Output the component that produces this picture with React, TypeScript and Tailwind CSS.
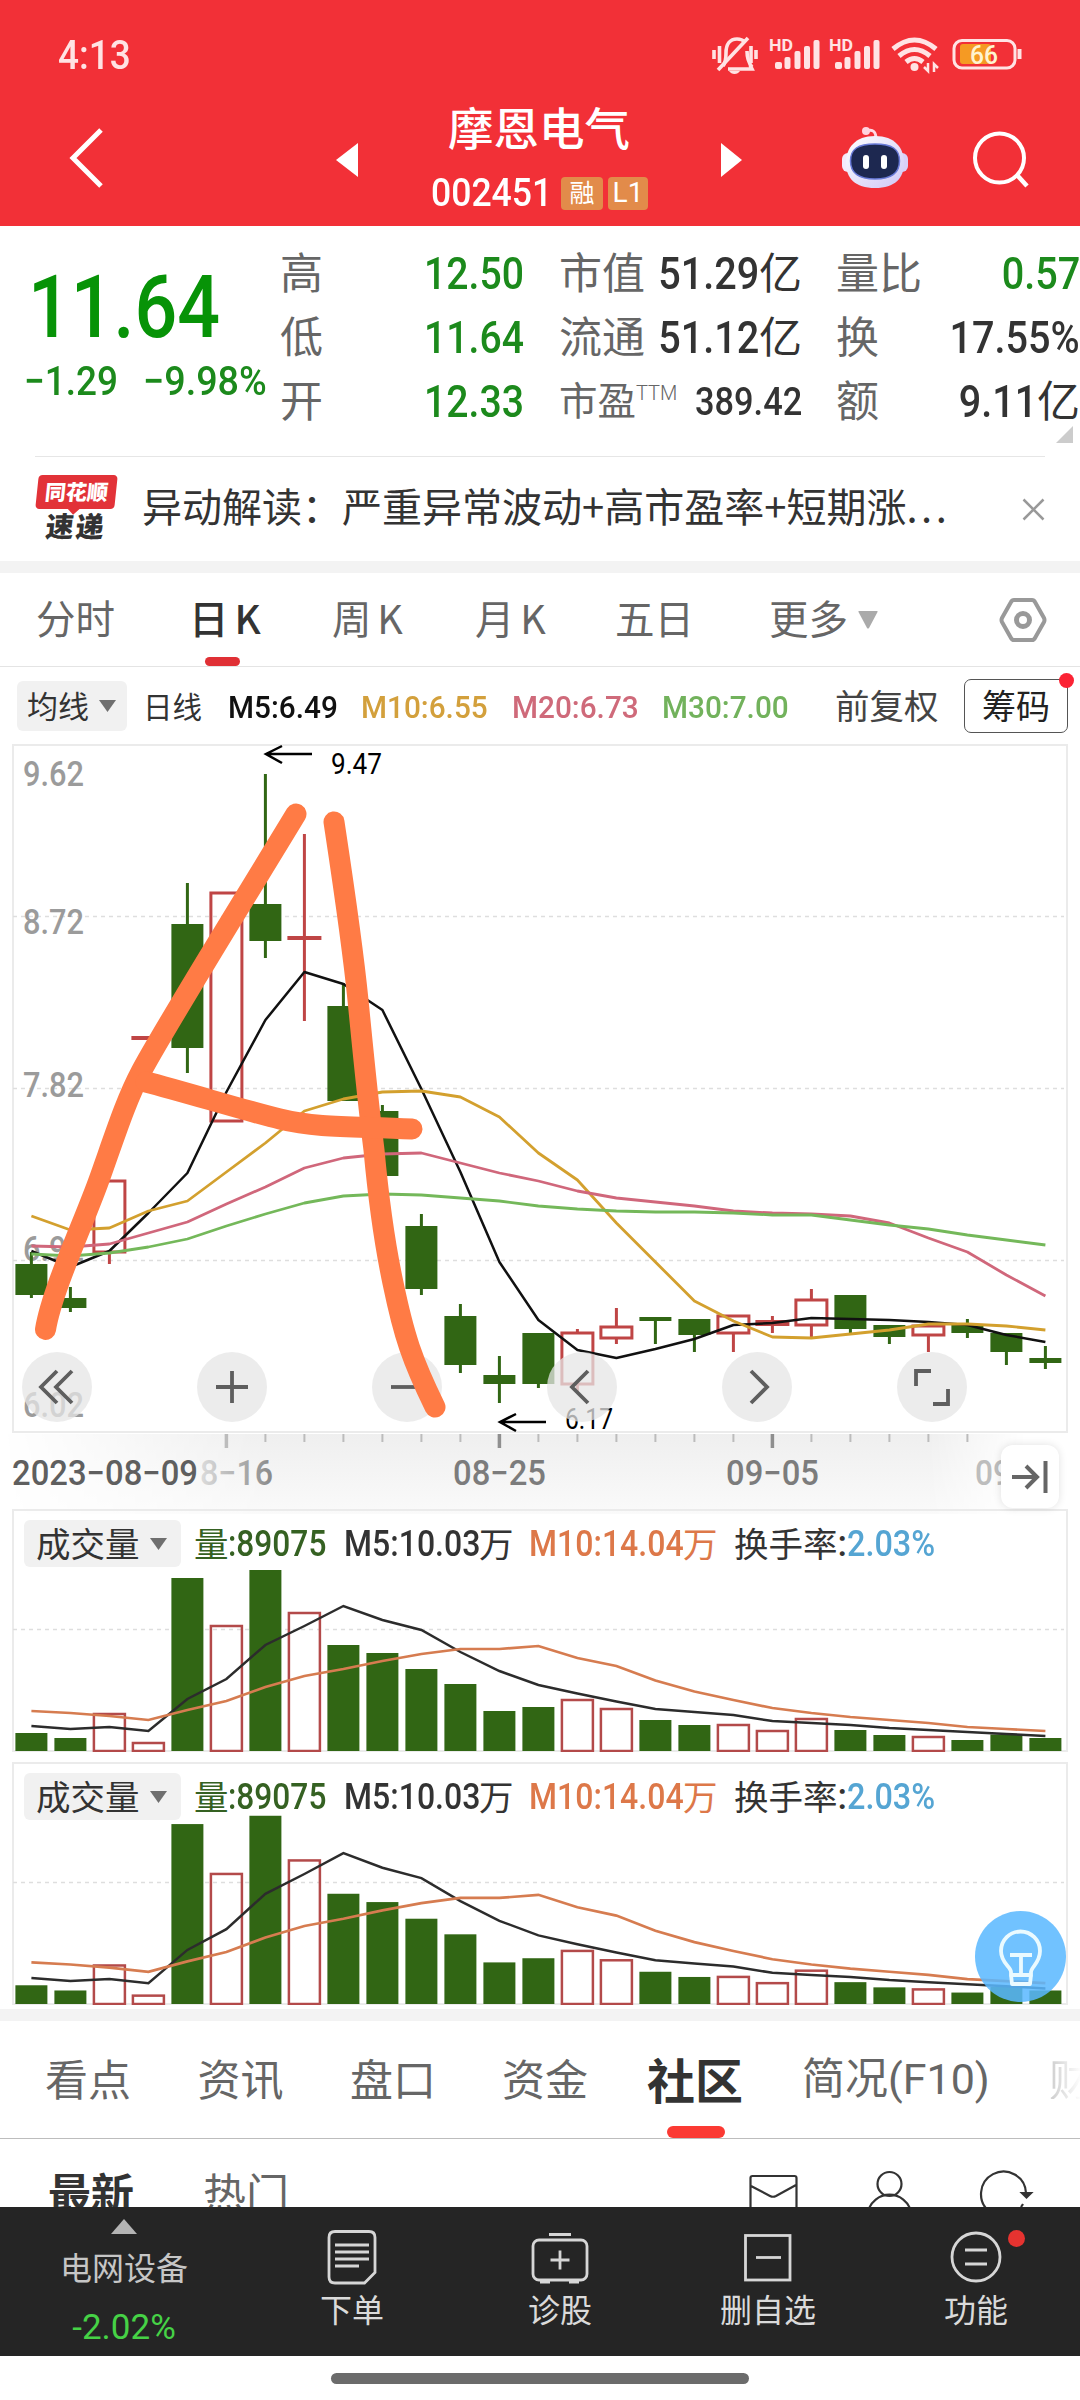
import { FC, ReactNode } from 'react';
import clsx from 'clsx';

type Candle = { up?: boolean; top: number; bottom: number; high?: number; low?: number };

const FIRST_X = 31.4;
const STEP = 39;
const cx = (i: number) => FIRST_X + STEP * i;
const toPoints = (values: number[]) => values.map((y, i) => `${cx(i)},${y}`).join(' ');

const candles: Candle[] = [
    { top: 1264, bottom: 1295, high: 1252, low: 1298 },
    { top: 1298, bottom: 1308, high: 1287, low: 1312 },
    { up: true, top: 1180, bottom: 1253, low: 1264 },
    { up: true, top: 1036, bottom: 1040 },
    { top: 924, bottom: 1048, high: 883, low: 1073 },
    { up: true, top: 892, bottom: 1122 },
    { top: 904, bottom: 941, high: 774, low: 958 },
    { up: true, top: 936, bottom: 940, high: 834, low: 1021 },
    { top: 1006, bottom: 1101, high: 983 },
    { top: 1111, bottom: 1176, high: 1105 },
    { top: 1226, bottom: 1289, high: 1214, low: 1295 },
    { top: 1316, bottom: 1365, high: 1304, low: 1373 },
    { top: 1375, bottom: 1384, high: 1356, low: 1403 },
    { top: 1333, bottom: 1384, low: 1388 },
    { up: true, top: 1332, bottom: 1385, high: 1329, low: 1392 },
    { up: true, top: 1326, bottom: 1339, high: 1308, low: 1344 },
    { top: 1317, bottom: 1321, low: 1344 },
    { top: 1319, bottom: 1335, low: 1352 },
    { up: true, top: 1315, bottom: 1334, low: 1352 },
    { up: true, top: 1320, bottom: 1326, high: 1316, low: 1333 },
    { up: true, top: 1299, bottom: 1326, high: 1289, low: 1337 },
    { top: 1295, bottom: 1329, low: 1333 },
    { top: 1325, bottom: 1337, low: 1344 },
    { up: true, top: 1325, bottom: 1336, low: 1352 },
    { top: 1325, bottom: 1333, high: 1319, low: 1338 },
    { top: 1333, bottom: 1352, low: 1365 },
    { top: 1358, bottom: 1363, high: 1346, low: 1369 },
];

const ma5 = [
    1251, 1267, 1251, 1213, 1173, 1092, 1020, 972, 984, 1010, 1089, 1172, 1262, 1320, 1350, 1358,
    1349, 1339, 1325, 1323, 1318, 1319, 1320, 1322, 1325, 1335, 1342,
];
const ma10 = [
    1216, 1230, 1228, 1211, 1201, 1172, 1143, 1111, 1099, 1092, 1091, 1097, 1117, 1153, 1180, 1223,
    1262, 1301, 1321, 1337, 1338, 1334, 1330, 1324, 1324, 1326, 1330,
];
const ma20 = [
    1246, 1247, 1244, 1233, 1222, 1204, 1187, 1168, 1158, 1154, 1153, 1163, 1173, 1181, 1191, 1198,
    1202, 1206, 1211, 1213, 1214, 1216, 1223, 1238, 1252, 1275, 1296,
];
const ma30 = [
    1254, 1256, 1253, 1247, 1239, 1226, 1214, 1203, 1196, 1194, 1195, 1198, 1201, 1206, 1209, 1211,
    1212, 1212, 1213, 1215, 1215, 1220, 1225, 1229, 1235, 1240, 1245,
];

// bar heights and averages in px above the base line
const volumes = [
    18, 13, 38, 9, 173, 126, 181, 139, 106, 98, 82, 67, 40, 44, 52, 43, 31, 26, 27, 21, 33, 21, 16,
    15, 11, 16.5, 13,
];
const volMa5 = [
    25, 22, 24, 20, 52, 72, 106, 125, 145, 131, 121, 99, 80, 66, 57.5, 49.5, 42, 39, 36, 30, 28, 26,
    23, 21, 19, 17, 15,
];
const volMa10 = [
    40, 38, 35, 31, 41, 50, 64, 75, 82, 90, 97, 102, 102, 105, 93, 85, 70.5, 59.5, 51, 43, 38, 34,
    31, 28, 24, 22, 20,
];

const quotes = [
    ['高', '12.50', '市值', '51.29', '量比', '0.57'],
    ['低', '11.64', '流通', '51.12', '换', '17.55%'],
    ['开', '12.33', '市盈', '389.42', '额', '9.11'],
];

const Num: FC<{ className?: string; children: ReactNode }> = ({ className, children }) => (
    <span
        className={clsx(
            'inline-block whitespace-nowrap font-[Roboto,sans-serif] font-medium',
            className
        )}
    >
        {children}
    </span>
);

const StatusBar = () => (
    <div className="flex h-[84px] items-center pl-[58px]">
        <Num className="mt-[27px] w-[640px] origin-left scale-x-[0.9] text-[41px] leading-none text-[#ffe3e4]">
            4:13
        </Num>
        <svg
            className="ml-[2px]"
            width="330"
            height="84"
            viewBox="700 0 330 84"
            fill="none"
            stroke="#ffe3e4"
            strokeWidth="3.6"
        >
            <path d="M714 50v9M719.5 46v17M751 46v17M756 50v9" />
            <path d="M723 66c3-4 3-8 3-13 0-9 4-14 11-14 3 0 6 1 8 3M747 51c0 6 1 11 5 16M728 69h24l-2-4" />
            <path d="M718 70L748 38" />
            <path d="M729 71h11q-2 3-5.500 3t-5.500-3z" fill="#ffe3e4" stroke="none" />
            {[775, 835].map((x) => (
                <g key={x} fill="#ffe3e4" stroke="none">
                    <text
                        x={x - 6}
                        y="51"
                        fontFamily="Roboto"
                        fontWeight="700"
                        fontSize="17"
                        textLength="24"
                        lengthAdjust="spacingAndGlyphs"
                    >
                        HD
                    </text>
                    <rect x={x} y="62" width="7" height="7" rx="2" />
                    <rect x={x + 9.500} y="57" width="6" height="12" rx="2" />
                    <rect x={x + 19.500} y="51" width="6" height="18" rx="2" />
                    <rect x={x + 29} y="46" width="6" height="23" rx="2" />
                    <rect x={x + 38.500} y="40" width="6" height="29" rx="2" />
                </g>
            ))}
            <path d="M893 49Q914.500 31 936 49M899 56Q914.500 43 930 56M906 62Q914.500 55 923 62" strokeWidth="5" />
            <circle cx="914.500" cy="67" r="4" fill="#ffe3e4" stroke="none" />
            <path d="M928 63v8l-4-4M934 72v-8l4 4" strokeWidth="2.500" />
            <rect x="954" y="40.500" width="61" height="27.500" rx="8" strokeWidth="3" />
            <path d="M1019.500 49v10" strokeWidth="4" />
            <rect x="960" y="44" width="31" height="20" rx="3" fill="#f59a23" stroke="none" />
            <text
                x="970"
                y="63.500"
                fill="#fff3d0"
                stroke="none"
                fontFamily="Roboto"
                fontWeight="500"
                fontSize="25"
                textLength="28"
                lengthAdjust="spacingAndGlyphs"
            >
                66
            </text>
        </svg>
    </div>
);

const Robot = () => (
    <svg width="70" height="66" viewBox="840 125 70 66">
        <defs>
            <linearGradient id="shell" x1="0" y1="0" x2="1" y2="1">
                <stop offset="0" stopColor="#fff" />
                <stop offset="1" stopColor="#cfc8f6" />
            </linearGradient>
        </defs>
        <path d="M867 131q9-3 9 8" stroke="#ffd9e4" strokeWidth="3" fill="none" />
        <circle cx="866" cy="131" r="4" fill="#ffd3df" />
        <rect x="842" y="153" width="12" height="19" rx="6" fill="#f3e9fb" />
        <rect x="896" y="153" width="12" height="19" rx="6" fill="#d9d0f8" />
        <path d="M875 136c20 0 29 12 29 27s-9 25-29 25-29-10-29-25 9-27 29-27z" fill="url(#shell)" />
        <path
            d="M875 144c17 0 24.500 5 24.500 17s-7.500 18-24.500 18-24.500-6-24.500-18 7.500-17 24.500-17z"
            fill="#1d2850"
            stroke="#6a7bd8"
            strokeWidth="1.500"
        />
        <rect x="863" y="155" width="6" height="14" rx="3" fill="#fff" />
        <rect x="881" y="155" width="6" height="14" rx="3" fill="#fff" />
    </svg>
);

const Header = () => (
    <header className="h-[226px] shrink-0 bg-[#f23037] text-white">
        <StatusBar />
        <div className="flex h-[142px] items-start">
            <svg className="ml-[66px] mt-[40px]" width="40" height="66" viewBox="66 124 40 66">
                <path d="M101 130L73 158l28 28" fill="none" stroke="#fff" strokeWidth="5" />
            </svg>
            <svg className="ml-[230px] mt-[59px]" width="22" height="34">
                <path d="M22 0v34L0 17z" fill="#fff" />
            </svg>
            <div className="ml-[52px] w-[260px] pt-[15px]">
                <h1 className="pl-[38px] text-[45.500px] leading-[54px] font-medium">摩恩电气</h1>
                <div className="mt-[23px] flex h-[34px] items-center pl-[21px]">
                    <Num className="w-[132px] origin-left scale-x-[0.9] text-[39.500px] leading-[34px]">
                        002451
                    </Num>
                    <span className="-ml-[2px] flex h-[33px] w-[42px] items-center justify-center rounded-[4px] bg-[#e28b4a] pb-[3px] text-[25px] leading-none">
                        融
                    </span>
                    <span className="ml-[5px] flex h-[33px] w-[40px] items-center justify-center rounded-[4px] bg-[#e28b4a] font-[Roboto] text-[28px] leading-none">
                        L1
                    </span>
                </div>
            </div>
            <svg className="ml-[51px] mt-[59px]" width="22" height="34">
                <path d="M0 0v34l21-17z" fill="#fff" />
            </svg>
            <div className="ml-[97px] mt-[41px]">
                <Robot />
            </div>
            <svg className="ml-[60px] mt-[44px]" width="64" height="64" viewBox="970 128 64 64">
                <g fill="none" stroke="#fff" strokeWidth="4">
                    <circle cx="999.500" cy="158" r="24.500" />
                    <path d="M1017 175l10 11" strokeWidth="4.500" />
                </g>
            </svg>
        </div>
    </header>
);

const Quote = () => (
    <section className="relative flex h-[230px] shrink-0 text-[#333]">
        <div className="w-[280px] text-[#079307]">
            <Num className="mt-[36px] ml-[28px] origin-left scale-x-[0.865] text-[87px] leading-[90px]">
                11.64
            </Num>
            <div className="-mt-[1px] flex pl-[24px] text-[41px] leading-[60px] text-[#1c8a1c]">
                <Num className="w-[119px] origin-left scale-x-[0.9]">−1.29</Num>
                <Num className="origin-left scale-x-[0.92]">−9.98%</Num>
            </div>
        </div>
        <div className="flex-1 pt-[15px]">
            {quotes.map(([a, av, b, bv, c, cv], i) => (
                <div key={a} className="flex h-[64px] items-center text-[43px] leading-none">
                    <span className="w-[60px] pb-[5px] text-[#666]">{a}</span>
                    <Num className="w-[184px] origin-right scale-x-[0.89] pt-[2px] text-right text-[44px] text-[#1c8a1c]">
                        {av}
                    </Num>
                    <span
                        className={clsx(
                            'ml-[35px] flex w-[120px] items-center pb-[5px] whitespace-nowrap text-[#666]',
                            i === 2 && 'text-[38.500px]'
                        )}
                    >
                        {b}
                        {i === 2 && (
                            <sup className="top-0 -mt-[12px] font-[Roboto] text-[20px] leading-none font-light">
                                TTM
                            </sup>
                        )}
                    </span>
                    <span className="flex w-[123px] items-center justify-end">
                        <Num
                            className={clsx(
                                'origin-right pt-[2px]',
                                i === 2
                                    ? 'scale-x-[0.87] text-[39.500px]'
                                    : 'scale-x-[0.9] text-[44px]'
                            )}
                        >
                            {bv}
                        </Num>
                        {i < 2 && <span className="pb-[5px]">亿</span>}
                    </span>
                    <span className="ml-[34px] w-[90px] pb-[5px] text-[#666]">{c}</span>
                    <span
                        className={clsx(
                            'flex w-[154px] items-center justify-end',
                            i === 0 && 'text-[#1c8a1c]'
                        )}
                    >
                        <Num className="origin-right scale-x-[0.9] pt-[2px] text-[44px]">{cv}</Num>
                        {i === 2 && <span className="pb-[5px]">亿</span>}
                    </span>
                </div>
            ))}
        </div>
        <svg className="absolute right-[7px] bottom-[13px]" width="17" height="17">
            <path d="M17 0v17H0z" fill="#ccc" />
        </svg>
    </section>
);

const NewsBar = () => (
    <section className="flex h-[105px] shrink-0 items-start px-[35px]">
        <div className="flex h-full w-full items-start border-t border-[#e6e6e6]">
            <div className="mt-[18px] w-[82px] pl-[2px]">
                <div className="relative flex h-[34px] w-[79px] -skew-x-6 items-center justify-center rounded-[4px] bg-[#e23238] pb-[2px]">
                    <span className="text-[21px] leading-none font-black text-white">同花顺</span>
                    <i className="absolute -bottom-[4px] left-[34px] size-[9px] rotate-45 bg-[#e23238]" />
                </div>
                <p className="mt-[1px] -skew-x-6 pl-[9px] text-[28px] leading-[30px] font-black tracking-[2px] text-[#333]">
                    速递
                </p>
            </div>
            <p className="ml-[25px] w-[845px] pt-[27px] text-[40px] leading-[42px] whitespace-nowrap text-[#333]">
                异动解读：严重异常波动+高市盈率+短期涨<span className="tracking-[3.500px]">...</span>
            </p>
            <svg className="mt-[41px] ml-auto shrink-0" width="23" height="23">
                <path d="M1.500 1.500l20 20M21.500 1.500l-20 20" stroke="#999" strokeWidth="2.500" />
            </svg>
        </div>
    </section>
);

const PeriodTabs = () => (
    <nav className="relative flex h-[94px] shrink-0 items-center border-b border-[#e4e4e4] pl-[36px] text-[39.500px] leading-none [word-spacing:-3px] text-[#666]">
        <span className="w-[153px] pb-[5px]">分时</span>
        <span className="w-[143px] pb-[5px] font-medium text-[#333]">日 K</span>
        <span className="w-[143px] pb-[5px]">周 K</span>
        <span className="w-[140px] pb-[5px]">月 K</span>
        <span className="w-[154px] pb-[5px]">五日</span>
        <span className="w-[89px] pb-[5px]">更多</span>
        <svg width="20" height="18">
            <path d="M1 0h18q1 0 .5 1L11 17q-1 1-2 0L.5 1Q0 0 1 0z" fill="#aaa" />
        </svg>
        <svg className="ml-[121px]" width="48" height="46" viewBox="0 0 48 46" fill="none" stroke="#999" strokeWidth="4">
            <path d="M15 3h18q2 0 3 2l9 16q1 2 0 4l-9 16q-1 2-3 2H15q-2 0-3-2L3 25q-1-2 0-4L12 5q1-2 3-2z" />
            <circle cx="24" cy="23" r="6.500" strokeWidth="5" />
        </svg>
        <i className="absolute bottom-0 left-[205px] h-[9px] w-[35px] rounded-full bg-[#e03035]" />
    </nav>
);

const Caret: FC<{ className?: string }> = ({ className }) => (
    <svg className={className} width="17" height="12">
        <path d="M0 0h17L8.500 12z" fill="#6f6f6f" />
    </svg>
);

const Indicators = () => (
    <div className="flex h-[77px] shrink-0 items-center pl-[17px] leading-none text-[#333]">
        <span className="flex h-[50px] w-[110px] items-center rounded-[6px] bg-[#f1f1f1] pl-[10px] text-[31px]">
            <span className="pb-[3px]">均线</span>
            <Caret className="ml-[10px]" />
        </span>
        <span className="ml-[16px] w-[85px] text-[29.500px]">日线</span>
        <Num className="w-[133px] origin-left scale-x-[0.93] pt-[2px] text-[32px] text-[#111]">
            M5:6.49
        </Num>
        <Num className="w-[151px] origin-left scale-x-[0.93] pt-[2px] text-[32px] text-[#d3a03c]">
            M10:6.55
        </Num>
        <Num className="w-[150px] origin-left scale-x-[0.93] pt-[2px] text-[32px] text-[#cf6a7a]">
            M20:6.73
        </Num>
        <Num className="w-[173px] origin-left scale-x-[0.93] pt-[2px] text-[32px] text-[#72b25c]">
            M30:7.00
        </Num>
        <span className="w-[129px] pb-[2px] text-[34.500px] text-[#444]">前复权</span>
        <span className="relative flex h-[54px] w-[104px] items-center justify-center rounded-[7px] border border-[#555] pb-[2px] text-[34px] text-[#222]">
            筹码
            <i className="absolute -top-[7px] -right-[7px] size-[15px] rounded-full bg-[#fb2334]" />
        </span>
    </div>
);

const DashLine: FC<{ y: number }> = ({ y }) => (
    <path d={`M13 ${y}H1064`} stroke="#dedede" strokeWidth="1.300" strokeDasharray="4 4" />
);

const PriceChart = () => (
    <svg className="block" width="1080" height="690" viewBox="0 744 1080 690" fill="none">
        <rect x="13" y="745" width="1054" height="687" stroke="#ebebeb" strokeWidth="2" />
        {[916.5, 1088.5, 1260.5].map((y) => (
            <DashLine key={y} y={y} />
        ))}
        <g fill="#9b9b9b" fontFamily="Roboto" fontWeight="500" fontSize="35">
            {(
                [
                    ['9.62', 786],
                    ['8.72', 934],
                    ['7.82', 1097],
                    ['6.92', 1261],
                    ['6.02', 1417],
                ] as [string, number][]
            ).map(([label, y]) => (
                <text key={label} x="23" y={y} textLength="61" lengthAdjust="spacingAndGlyphs">
                    {label}
                </text>
            ))}
        </g>
        {candles.map((c, i) => {
            const x = cx(i);
            const color = c.up ? '#bf4545' : '#316614';
            const flat = c.bottom - c.top < 7;
            return (
                <g key={i}>
                    {c.high && <path d={`M${x} ${c.high}V${c.top}`} stroke={color} strokeWidth="3" />}
                    {c.low && <path d={`M${x} ${c.bottom}V${c.low}`} stroke={color} strokeWidth="3" />}
                    {c.up && !flat ? (
                        <rect
                            x={x - 15.500}
                            y={c.top + 1}
                            width="31"
                            height={c.bottom - c.top - 2}
                            stroke={color}
                            strokeWidth="3"
                        />
                    ) : (
                        <rect
                            x={c.up ? x - 17 : x - 16}
                            y={c.top}
                            width={c.up ? 34 : 32}
                            height={c.bottom - c.top}
                            fill={color}
                        />
                    )}
                </g>
            );
        })}
        <g strokeWidth="2.800" strokeLinejoin="round">
            <polyline points={toPoints(ma5)} stroke="#111" strokeWidth="2.500" />
            <polyline points={toPoints(ma10)} stroke="#d3a02e" />
            <polyline points={toPoints(ma20)} stroke="#d0677b" />
            <polyline points={toPoints(ma30)} stroke="#74b85a" />
        </g>
        <g stroke="#000" strokeWidth="2.500">
            <path d="M312 754H266M282 746l-16 8 16 9" />
            <path d="M546 1422h-46M516 1414l-16 8 16 9" />
        </g>
        <g fill="#000" fontFamily="Roboto" fontSize="30">
            <text x="331" y="774" textLength="51" lengthAdjust="spacingAndGlyphs">
                9.47
            </text>
            <text x="565" y="1429" textLength="48" lengthAdjust="spacingAndGlyphs">
                6.17
            </text>
        </g>
    </svg>
);

const toolIcons = [
    'M35 19L19 35l16 16M50 19L34 35l16 16',
    'M19 35h32M35 19v32',
    'M19 35h32',
    'M41 19L25 35l16 16',
    'M29 19l16 16-16 16',
    'M19 34V19h15M51 37v15H36',
];

const ChartTools = () => (
    <div className="absolute top-[608px] left-[22px] flex gap-[105px]">
        {toolIcons.map((d) => (
            <span key={d} className="size-[70px] rounded-full bg-[#e6e6e6]/75">
                <svg width="70" height="70" fill="none" stroke="#5e5e5e" strokeWidth="3.800">
                    <path d={d} />
                </svg>
            </span>
        ))}
    </div>
);

// freehand marker drawn over the chart
const Marker = () => (
    <svg
        className="absolute top-0 left-0"
        width="1080"
        height="690"
        viewBox="0 744 1080 690"
        fill="none"
        stroke="#ff7b45"
        strokeWidth="21"
        strokeLinecap="round"
        strokeLinejoin="round"
    >
        <path d="M45.500 1329.500C52 1290 84 1222 99 1180C114 1138 126 1100 141 1072C160 1035 250 890 296 814" />
        <path d="M334 822C342 875 352 940 358 1000C364 1062 369 1110 374 1150C380 1215 386 1250 393 1283C404 1336 412 1360 435 1407" />
        <path d="M146 1082C185 1092 250 1112 280 1119C320 1129 360 1126 412 1129" />
    </svg>
);

const TimeAxis = () => (
    <div className="relative h-[75px] shrink-0">
        <div className="h-[80px] bg-linear-to-b from-[#efefef] to-[#fafafa] mask-[linear-gradient(to_right,transparent,black_25%,black_86%,transparent_95%)]" />
        <svg className="absolute top-0 left-0" width="1080" height="75" viewBox="0 1434 1080 75">
            {Array.from({ length: 20 }, (_, k) => k + 5).map((i) => {
                const major = i === 5 || i === 12 || i === 19;
                return (
                    <path
                        key={i}
                        d={`M${cx(i)} 1434v${major ? 14 : 8}`}
                        stroke={major && i !== 5 ? '#8f8f8f' : '#bcbcbc'}
                        strokeWidth={major ? 3.500 : 2}
                    />
                );
            })}
            <defs>
                <linearGradient id="dateFade" gradientUnits="userSpaceOnUse" x1="195" x2="272">
                    <stop offset="0" stopColor="#e2e2e2" />
                    <stop offset="1" stopColor="#8a8a8a" />
                </linearGradient>
            </defs>
            <g fontFamily="Roboto" fontWeight="500" fontSize="35" fill="#7c7c7c">
                <text x="12" y="1485" fill="#5f5f5f" textLength="186" lengthAdjust="spacingAndGlyphs">
                    2023−08−09
                </text>
                <text x="200" y="1485" fill="url(#dateFade)" textLength="73" lengthAdjust="spacingAndGlyphs">
                    8−16
                </text>
                <text x="453" y="1485" textLength="93" lengthAdjust="spacingAndGlyphs">
                    08−25
                </text>
                <text x="726" y="1485" textLength="93" lengthAdjust="spacingAndGlyphs">
                    09−05
                </text>
                <text x="975" y="1485" fill="#bdbdbd" textLength="36" lengthAdjust="spacingAndGlyphs">
                    09
                </text>
            </g>
        </svg>
        <button
            type="button"
            className="absolute top-[11px] left-[1001px] z-10 h-[63px] w-[58px] rounded-[12px] bg-white shadow-[0_0_8px_rgba(0,0,0,0.12)]"
        >
            <svg width="58" height="63" fill="none" stroke="#666" strokeWidth="4">
                <path d="M11 32h25M25 21l11 11-11 11M44.500 16v32" />
            </svg>
        </button>
    </div>
);

const VolumeChart: FC<{ height: number; scale: number }> = ({ height, scale }) => {
    const base = height;
    const line = (values: number[]) => toPoints(values.map((v) => base - v * scale));
    return (
        <div className="relative shrink-0">
            <svg className="block" width="1080" height={height + 1} fill="none">
                <path d={`M13 ${base}V1H1067V${base}z`} stroke="#ebebeb" strokeWidth="2" />
                <DashLine y={120.5} />
                {volumes.map((v, i) => {
                    const h = v * scale;
                    return candles[i].up ? (
                        <rect
                            key={i}
                            x={cx(i) - 15.500}
                            y={base - h + 1}
                            width="31"
                            height={h - 1}
                            stroke="#b34a4a"
                            strokeWidth="2.500"
                        />
                    ) : (
                        <rect key={i} x={cx(i) - 16} y={base - h} width="32" height={h} fill="#316614" />
                    );
                })}
                <polyline points={line(volMa5)} stroke="#2c2c2c" strokeWidth="2.500" />
                <polyline points={line(volMa10)} stroke="#d67c50" strokeWidth="2.700" />
            </svg>
            <div className="absolute top-[11px] left-[24px] flex h-[47px] items-center text-[34.500px] leading-none text-[#333]">
                <span className="flex h-[47px] w-[157px] items-center rounded-[6px] bg-[#f1f1f1] pl-[12px]">
                    <span className="pb-[3px]">成交量</span>
                    <Caret className="ml-[10px]" />
                </span>
                <span className="ml-[13px] flex w-[150px] items-center text-[#356122]">
                    <span className="pb-[3px]">量</span>
                    <Num className="-ml-[1px] origin-left scale-x-[0.88] text-[36px]">:89075</Num>
                </span>
                <Num className="w-[135px] origin-left scale-x-[0.89] text-[36px]">M5:10.03</Num>
                <span className="w-[50px] pb-[3px]">万</span>
                <Num className="w-[154px] origin-left scale-x-[0.89] text-[36px] text-[#dd7849]">
                    M10:14.04
                </Num>
                <span className="w-[51px] pb-[3px] text-[#dd7849]">万</span>
                <span className="pb-[3px]">换手率</span>
                <Num className="w-[9px] text-[36px]">:</Num>
                <Num className="origin-left scale-x-[0.9] text-[36px] text-[#55a5d3]">2.03%</Num>
            </div>
        </div>
    );
};

const BulbButton = () => (
    <svg className="absolute top-[1911px] left-[975px]" width="91" height="91" viewBox="975 1911 91 91">
        <circle cx="1020.500" cy="1956.500" r="45.500" fill="#5ab8ff" fillOpacity="0.86" />
        <g fill="none" stroke="#eafaff" strokeWidth="3.800" strokeLinejoin="round">
            <path d="M1011 1975v-3c0-5-10-9-10-21a19.500 19.500 0 0139 0c0 12-9 16-9 21v3z" />
            <path d="M1010 1955h22M1021 1955v20M1011 1975l1 9h18l1-9" />
        </g>
    </svg>
);

const SectionTabs = () => (
    <nav className="relative flex h-[118px] shrink-0 items-center overflow-hidden border-b border-[#bdbdbd] pb-[4px] pl-[45px] text-[43px] leading-none whitespace-nowrap text-[#666]">
        <span className="w-[152.500px] shrink-0">看点</span>
        <span className="w-[152.500px] shrink-0">资讯</span>
        <span className="w-[152px] shrink-0">盘口</span>
        <span className="w-[145px] shrink-0">资金</span>
        <span className="w-[155px] shrink-0 text-[48px] font-bold text-[#333]">社区</span>
        <span className="w-[247px] shrink-0">
            简况<span className="font-[Roboto] text-[43px]">(F10)</span>
        </span>
        <span className="shrink-0 bg-linear-to-r from-[#ccc] to-white to-75% bg-clip-text text-transparent">
            财
        </span>
        <i className="absolute bottom-0 left-[667px] h-[12px] w-[58px] rounded-full bg-[#fb3a33]" />
    </nav>
);

const PostFilter = () => (
    <div className="flex h-[68px] shrink-0 overflow-hidden pl-[48px] text-[43px] leading-[54px] text-[#666]">
        <span className="mt-[25px] w-[155px] font-bold text-[#333]">最新</span>
        <span className="mt-[25px] w-[542px]">热门</span>
        <svg width="290" height="68" viewBox="745 2139 290 68" fill="none" stroke="#333" strokeWidth="2.200">
            <path d="M750.500 2212v-34q0-2 2-2h42q2 0 2 2v34M751 2186l19 10q3 1.500 6 0l20-11" />
            <circle cx="889.500" cy="2184" r="12" />
            <path d="M868 2212a22 22 0 0143 0" />
            <path d="M990 2212a22.500 22.500 0 1136-19" />
            <path d="M1022 2193h9l-4.500 4.500z" fill="#333" />
            <path d="M1021 2207l2-3" />
        </svg>
    </div>
);

const BottomItem: FC<{ label: string; className: string; children: ReactNode }> = ({
    label,
    className,
    children,
}) => (
    <div className={clsx('flex flex-col items-center pt-[20px]', className)}>
        <svg width="110" height="60" viewBox="0 0 110 60" fill="none" stroke="#d6d6d6" strokeWidth="2.800">
            {children}
        </svg>
        <span className="mt-[4px] text-[32px] leading-[34px] text-[#dadada]">{label}</span>
    </div>
);

const BottomBar = () => (
    <footer className="flex h-[149px] shrink-0 bg-[#252525]">
        <div className="flex w-[248px] flex-col items-center pt-[12px]">
            <svg width="26" height="15">
                <path d="M13 0l13 15H0z" fill="#b4b4b4" />
            </svg>
            <span className="mt-[15px] text-[32px] leading-[34px] text-[#c6c6c6]">电网设备</span>
            <Num className="mt-[27px] text-[35px] leading-[36px] font-normal! text-[#46d246]">
                -2.02%
            </Num>
        </div>
        <BottomItem label="下单" className="w-[208px]">
            <path d="M38 4.500h34q6 0 6 6v35L67.500 56H38q-6 0-6-6V10.500q0-6 6-6z" />
            <path d="M38 18h34M38 25h34M38 32h34M38 39h24" />
        </BottomItem>
        <BottomItem label="诊股" className="w-[208px]">
            <rect x="28" y="13" width="54" height="40" rx="6" />
            <path d="M44 7.500h22M45.500 33h19M55 23.500v19M35 55h10M64 55h10" />
        </BottomItem>
        <BottomItem label="删自选" className="w-[208px]">
            <rect x="32.500" y="8.500" width="44.500" height="44.500" />
            <path d="M43 30.500h25" />
        </BottomItem>
        <BottomItem label="功能" className="w-[208px]">
            <circle cx="55" cy="30" r="24" />
            <path d="M44 23h22M44 37h22" />
            <circle cx="95.500" cy="11.500" r="8.500" fill="#e63330" stroke="none" />
        </BottomItem>
    </footer>
);

const App: FC = () => (
    <main className="relative flex h-[2400px] w-[1080px] flex-col overflow-hidden bg-white font-['Noto_Sans_CJK_SC',sans-serif]">
        <Header />
        <Quote />
        <NewsBar />
        <div className="h-[12px] shrink-0 bg-[#f3f3f3]" />
        <PeriodTabs />
        <Indicators />
        <section className="relative h-[690px] shrink-0">
            <PriceChart />
            <ChartTools />
            <Marker />
        </section>
        <TimeAxis />
        <VolumeChart height={242} scale={1} />
        <div className="h-[10px] shrink-0" />
        <VolumeChart height={242} scale={1.04} />
        <div className="mt-[4px] h-[12px] shrink-0 bg-[#f3f3f3]" />
        <SectionTabs />
        <PostFilter />
        <BottomBar />
        <div className="mx-auto mt-[17px] h-[11px] w-[418px] shrink-0 rounded-full bg-[#6b6b6b]" />
        <BulbButton />
    </main>
);

export default App;
